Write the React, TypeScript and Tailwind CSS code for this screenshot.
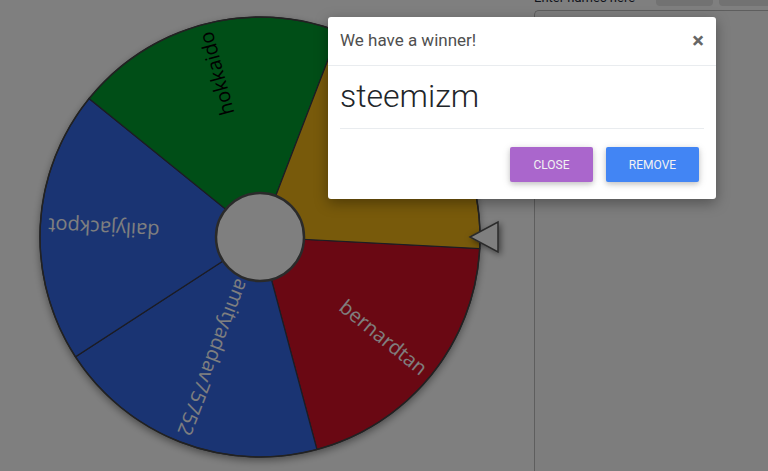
import React from "react";

type Slice = { label: string; color: string; text: string };

const slices: Slice[] = [
  { label: "bernardtan", color: "#d41026", text: "#ffffff" },
  { label: "amityaddav75752", color: "#3468e6", text: "#ffffff" },
  { label: "dailyjackpot", color: "#3468e6", text: "#ffffff" },
  { label: "hokkaido", color: "#009c2e", text: "#000000" },
  { label: "steemizm", color: "#f0b416", text: "#000000" },
];

const CX = 260;
const CY = 237;
const R = 220;
const START = 3;

const pt = (deg: number, r: number) => {
  const a = (deg * Math.PI) / 180;
  return [CX + r * Math.cos(a), CY + r * Math.sin(a)];
};

const Wheel = () => {
  const step = 360 / slices.length;
  return (
    <svg width={534} height={471} viewBox="0 0 534 471">
      <defs>
        <filter id="wheelShadow" x="-10%" y="-10%" width="120%" height="120%">
          <feDropShadow dx="0" dy="3" stdDeviation="4" floodColor="#000" floodOpacity="0.45" />
        </filter>
        <filter id="pinShadow" x="-50%" y="-50%" width="200%" height="200%">
          <feDropShadow dx="2" dy="2" stdDeviation="3" floodColor="#000" floodOpacity="0.5" />
        </filter>
      </defs>

      <g filter="url(#wheelShadow)">
        <circle cx={CX} cy={CY} r={R} fill="#fff" />
      </g>

      {slices.map((s, i) => {
        const a0 = START + i * step;
        const a1 = a0 + step;
        const [x0, y0] = pt(a0, R);
        const [x1, y1] = pt(a1, R);
        return (
          <path
            key={s.label}
            d={`M ${CX} ${CY} L ${x0} ${y0} A ${R} ${R} 0 0 1 ${x1} ${y1} Z`}
            fill={s.color}
            stroke="#383848"
            strokeWidth={1.2}
          />
        );
      })}

      {slices.map((s, i) => {
        const mid = START + i * step + step / 2;
        return (
          <text
            key={s.label + "-t"}
            transform={`rotate(${mid} ${CX} ${CY})`}
            x={CX + R - 8}
            y={CY}
            textAnchor="end"
            dominantBaseline="central"
            fill={s.text}
            fontSize={20}
            fontFamily="'Open Sans', sans-serif"
          >
            {s.label}
          </text>
        );
      })}

      <circle cx={CX} cy={CY} r={R} fill="none" stroke="#444" strokeWidth={1.5} />
      <circle cx={CX} cy={CY} r={44} fill="#fff" stroke="#555" strokeWidth={2.5} />

      <polygon
        points="470,237 498,222 498,252"
        fill="#fff"
        stroke="#555"
        strokeWidth={1.5}
        filter="url(#pinShadow)"
      />
    </svg>
  );
};

export default function App() {
  return (
    <div className="relative h-[471px] w-[768px] overflow-hidden bg-white font-['Roboto',sans-serif]">
      <div className="flex h-full">
        <div className="w-[534px] shrink-0">
          <Wheel />
        </div>

        {/* Names panel */}
        <div className="-mt-[10px] flex flex-1 flex-col">
          <div className="flex h-[16px] items-start justify-between">
            <span className="pt-[2px] text-[13px] leading-[12px] text-gray-800">Enter names here</span>
            <div className="flex gap-[6px]">
              <div className="h-[16px] w-[57px] rounded-b bg-[#e4e4e4]" />
              <div className="h-[16px] w-[49px] rounded-bl bg-[#e4e4e4]" />
            </div>
          </div>
          <div className="mt-[4px] flex-1 rounded-tl-[5px] border-l border-t border-[#bdbdbd] bg-[#fafafa]" />
        </div>
      </div>

      {/* Backdrop */}
      <div className="absolute inset-0 bg-black/50" />

      {/* Winner modal */}
      <div className="absolute left-[328px] top-[17px] w-[388px] rounded-[3px] bg-white shadow-[0_4px_14px_rgba(0,0,0,0.35)]">
        <div className="flex h-[49px] items-center justify-between border-b border-[#e9ecef] pl-3 pr-[12px]">
          <h4 className="text-[17px] font-normal text-[#4f4f4f]">We have a winner!</h4>
          <button className="text-[22px] font-bold leading-none text-[#666]">×</button>
        </div>
        <div className="px-3 pt-[10px]">
          <p className="text-[32px] font-light leading-[40px] text-[#212529]">steemizm</p>
          <hr className="mt-3 border-[#e9ecef]" />
        </div>
        <div className="flex justify-end gap-[13px] pb-[17px] pr-[17px] pt-[18px]">
          <button className="h-[35px] w-[83px] rounded-[2px] bg-[#aa66cc] text-[12px] font-normal text-[#f2f2f2] shadow-[0_2px_5px_rgba(0,0,0,0.16),0_2px_10px_rgba(0,0,0,0.12)]">
            CLOSE
          </button>
          <button className="h-[35px] w-[93px] rounded-[2px] bg-[#4285f4] text-[12px] font-normal text-[#f2f2f2] shadow-[0_2px_5px_rgba(0,0,0,0.16),0_2px_10px_rgba(0,0,0,0.12)]">
            REMOVE
          </button>
        </div>
      </div>
    </div>
  );
}
